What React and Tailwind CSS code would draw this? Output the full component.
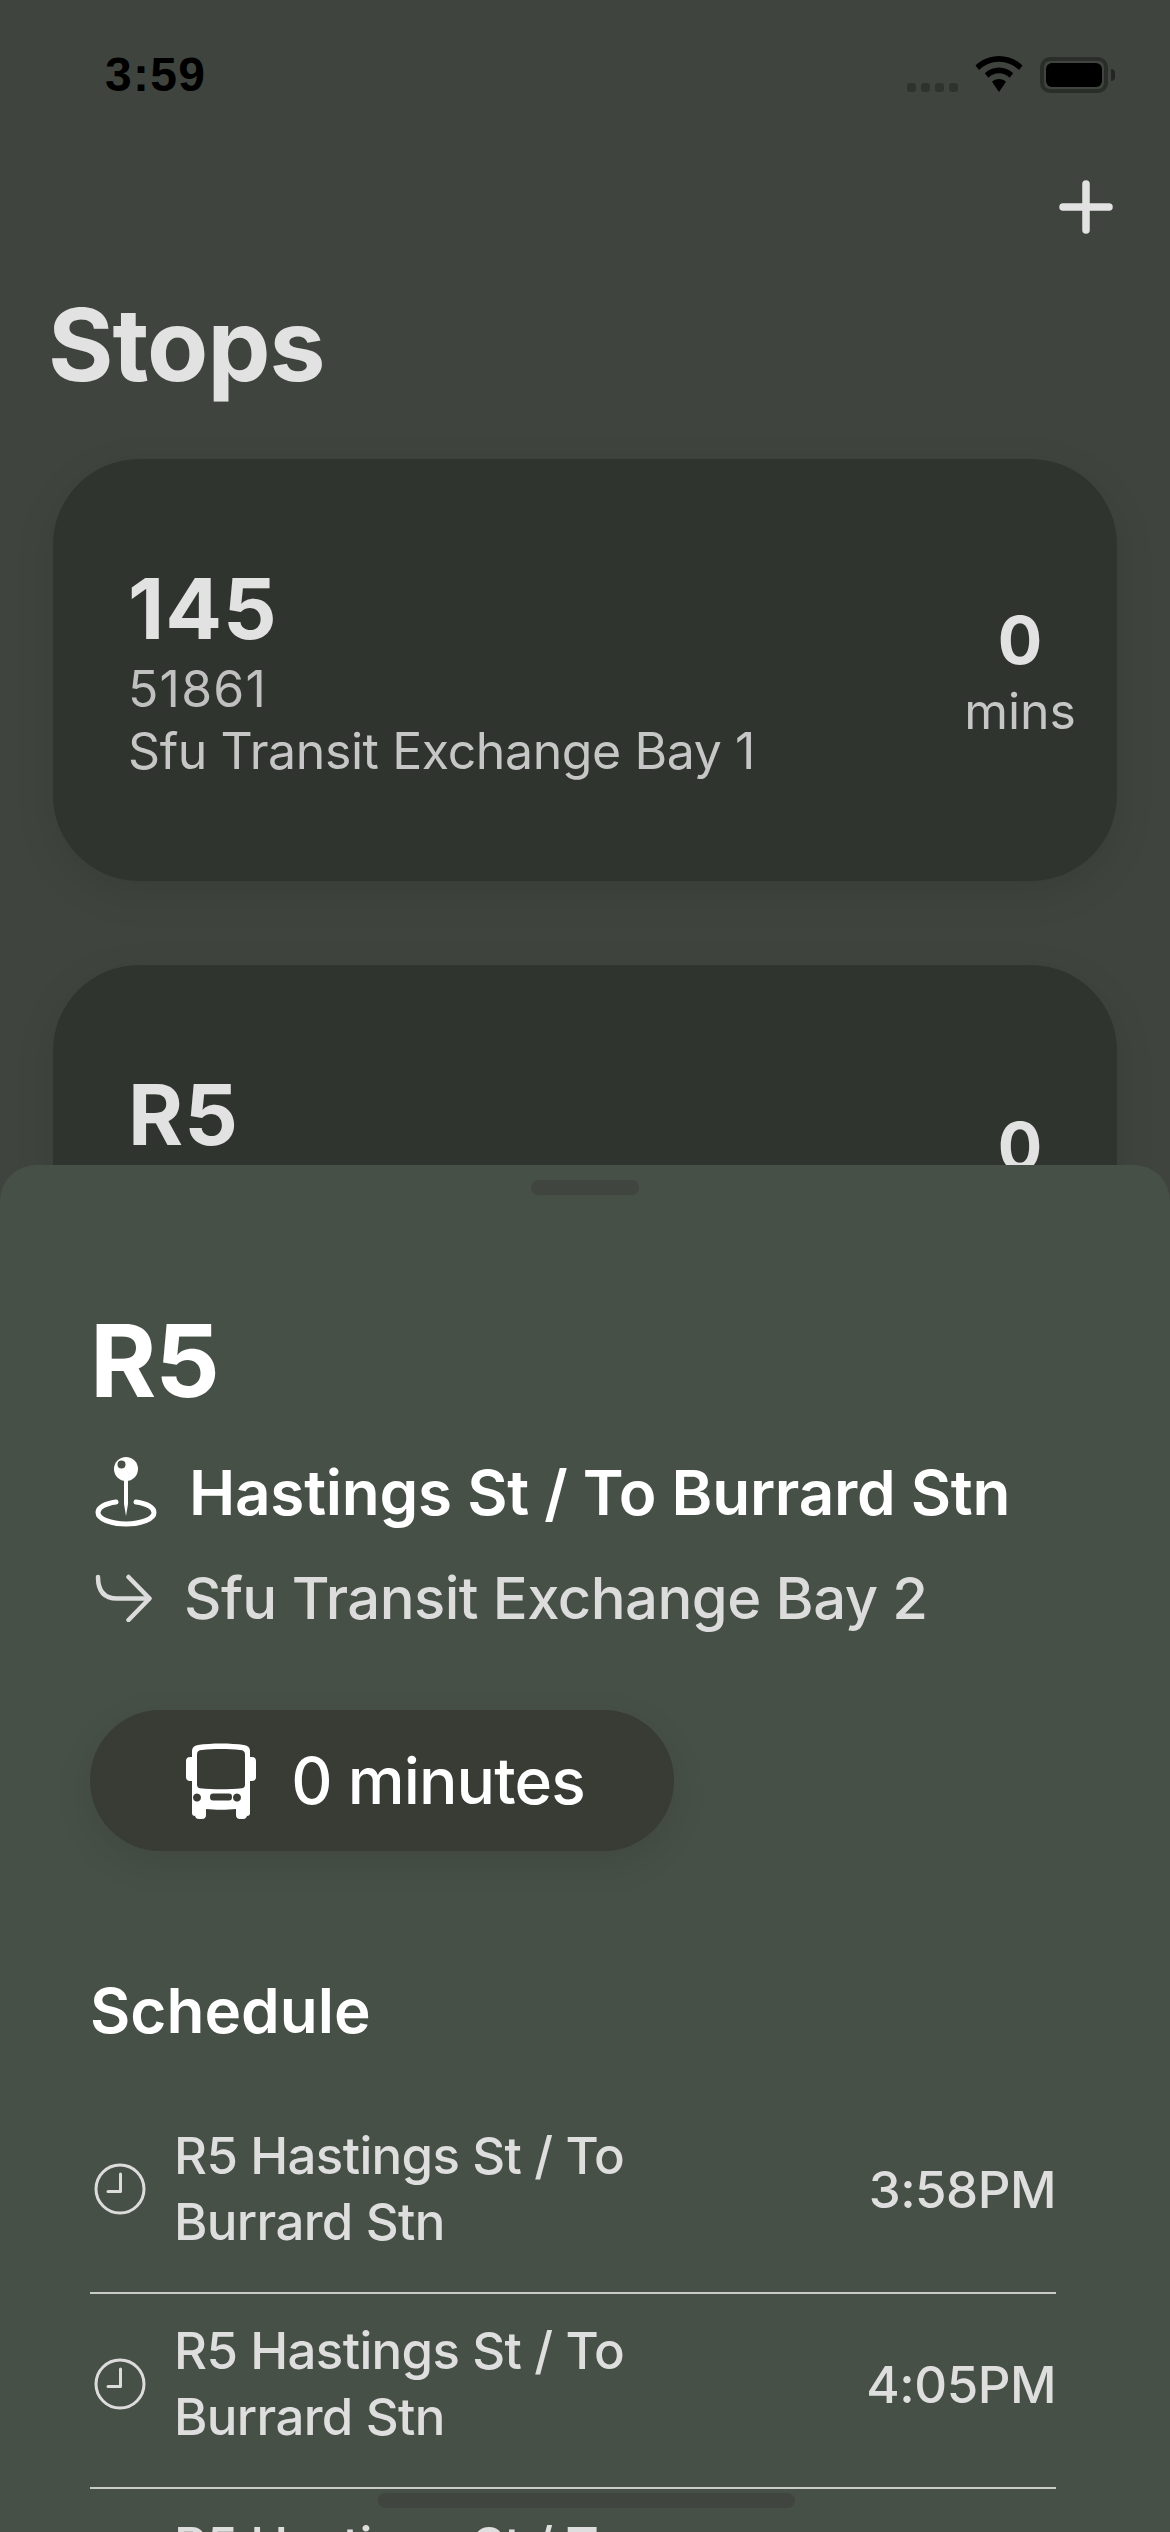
import React from "react";

const font = { fontFamily: "Inter, sans-serif" };

function Wifi() {
  return (
    <svg width="48" height="36" viewBox="0 0 48 36" fill="#000">
      <path d="M24 0C15 0 6.800 3.500 0.500 9.500L4 14C9.300 9 16.300 5.800 24 5.800S38.700 9 44 14L47.500 9.500C41.200 3.500 33 0 24 0Z" />
      <path d="M24 11.500C18.600 11.500 13.600 13.600 9.800 17.200L13.400 21.700C16.200 19 19.900 17.300 24 17.300S31.800 19 34.600 21.700L38.200 17.200C34.400 13.600 29.400 11.500 24 11.500Z" />
      <path d="M24 23C21.300 23 18.900 24 17 25.700L24 36L31 25.700C29.100 24 26.700 23 24 23Z" />
    </svg>
  );
}

function Pin() {
  return (
    <svg width="62" height="72" viewBox="0 0 62 72" fill="none">
      <circle cx="31" cy="13" r="12" fill="#fff" />
      <circle cx="26.500" cy="8.500" r="4" fill="#485046" />
      <path d="M29 24H33V48L31 60L29 48Z" fill="#fff" />
      <path d="M21 46C10 47.500 3 51.500 3 56.500C3 63 15.500 68 31 68S59 63 59 56.500C59 51.500 52 47.500 41 46" stroke="#fff" strokeWidth="5" strokeLinecap="round" />
    </svg>
  );
}

function Turn() {
  return (
    <svg width="58" height="48" viewBox="0 0 58 48" fill="none" stroke="#dcdcdc" strokeWidth="4.500" strokeLinecap="round" strokeLinejoin="round">
      <path d="M3 3C3 17 9 24.500 22 24.500H54" />
      <path d="M33.500 3L54.500 24.500L33.500 46" />
    </svg>
  );
}

function Bus() {
  return (
    <svg width="72" height="76" viewBox="0 0 72 76" fill="#fff">
      <path fillRule="evenodd" d="M13 2C26 0 46 0 59 2C63 2.500 65 4.500 65 8V14H67C69.500 14 71 15.500 71 18V34C71 36.500 69.500 38 67 38H65V70C65 72 64 73 62 73V72C62 74.500 60.500 76 58 76H55C52.500 76 51 74.500 51 72V66C42 67 30 67 21 66V72C21 74.500 19.500 76 17 76H14C11.500 76 10 74.500 10 72V73C8 73 7 72 7 70V38H5C2.500 38 1 36.500 1 34V18C1 15.500 2.500 14 5 14H7V8C7 4.500 9 2.500 13 2ZM17 7C13.500 7 12 8.500 12 11.500V42C12 44 13.500 45 15 45.200C28 46.500 44 46.500 57 45.200C58.500 45 60 44 60 42V11.500C60 8.500 58.500 7 55 7C43 5.800 29 5.800 17 7ZM16 54.500A4 4 0 1 0 16 54.510ZM56 54.500A4 4 0 1 0 56 54.510ZM28 50.500C26 50.500 25 51.500 25 54S26 57.500 28 57.500H44C46 57.500 47 56.500 47 54S46 50.500 44 50.500Z" />
    </svg>
  );
}

function Clock() {
  return (
    <svg width="52" height="52" viewBox="0 0 52 52" fill="none" stroke="#dcdcdc" strokeLinecap="round" strokeLinejoin="round">
      <circle cx="26" cy="26" r="24" strokeWidth="3" />
      <path d="M26.500 11V28.500H14" strokeWidth="3" />
    </svg>
  );
}

function StopCard({ route, id, name, last }) {
  return (
    <div className={`flex items-center justify-between h-[422px] rounded-[86px] bg-[#30342e] pl-[75px] pr-[41px] shadow-[0_12px_40px_rgba(0,0,0,0.1)] ${last ? "" : "mb-[84px]"}`}>
      <div className="flex flex-col pt-[4px]">
        <span className="text-[84px] leading-[92px] font-bold text-[#e2e2e2] tracking-[1px]">{route}</span>
        <span className="text-[50px] leading-[58px] mt-[5px] text-[#c0c0c0] tracking-[1.2px]">{id}</span>
        <span className="text-[50px] leading-[62px] mt-[2px] text-[#c6c6c6] tracking-[-0.4px]">{name}</span>
      </div>
      <div className="flex flex-col items-center mt-[4px]">
        <span className="text-[66px] leading-[72px] font-bold text-[#e2e2e2]">0</span>
        <span className="text-[50px] leading-[60px] mt-[5px] text-[#c6c6c6]">mins</span>
      </div>
    </div>
  );
}

function Row({ time }) {
  return (
    <div className="flex items-center h-[195px] pb-[10px] border-b-2 border-[#c9cbc8]">
      <div className="w-[84px] pl-[4px] mb-[4px] shrink-0 flex"><Clock /></div>
      <div className="flex-1 mb-[3px] text-[51px] leading-[66px] font-medium text-[#dedede] tracking-[-0.65px]">
        R5 Hastings St / To<br />Burrard Stn
      </div>
      <div className="text-[51px] font-medium text-[#dedede] tracking-[-0.5px]">{time}</div>
    </div>
  );
}

export default function App() {
  return (
    <div style={font} className="relative w-[1170px] h-[2532px] overflow-hidden bg-[#3f453e]">
      <div className="flex items-start justify-between h-[150px] pl-[105px] pr-[55px] pt-[51px]">
        <span style={{ fontFamily: "'Liberation Sans', sans-serif" }} className="text-[48px] leading-[48px] font-bold text-black tracking-[1.3px]">3:59</span>
        <div className="flex items-start">
          <div className="flex gap-[5px] mt-[32px] mr-[17px]">
            <span className="w-[9px] h-[9px] rounded-[3px] bg-[#2f332e]" />
            <span className="w-[9px] h-[9px] rounded-[3px] bg-[#2f332e]" />
            <span className="w-[9px] h-[9px] rounded-[3px] bg-[#2f332e]" />
            <span className="w-[9px] h-[9px] rounded-[3px] bg-[#2f332e]" />
          </div>
          <div className="mt-[5px] mr-[17px] flex"><Wifi /></div>
          <div className="flex items-center mt-[6px]">
            <div className="w-[68px] h-[36px] rounded-[10px] border-[4px] border-[#2a2e29] p-[2px]">
              <div className="w-full h-full rounded-[6px] bg-black" />
            </div>
            <span className="w-[4px] h-[12px] ml-[3px] rounded-r-full bg-[#232622]" />
          </div>
        </div>
      </div>
      <div className="flex justify-end pr-[57px] mt-[30px] h-[54px]">
        <svg width="54" height="54" viewBox="0 0 54 54" stroke="#e2e2e2" strokeWidth="7.500" strokeLinecap="round">
          <path d="M27 4V50M4 27H50" />
        </svg>
      </div>
      <h1 className="pl-[48px] mt-[53px] text-[100px] leading-[116px] font-bold text-[#e2e2e2] tracking-[-1px]">Stops</h1>
      <div className="px-[53px] mt-[56px]">
        <StopCard route="145" id="51861" name="Sfu Transit Exchange Bay 1" />
        <StopCard route="R5" id="53096" name="Sfu Transit Exchange Bay 2" last />
      </div>

      <div className="absolute left-0 right-0 top-[1165px] bottom-0 overflow-hidden rounded-t-[36px] bg-[#475046] px-[90px]">
        <div className="mx-auto mt-[15px] w-[108px] h-[15px] rounded-[7px] bg-[#40463f]" />
        <h2 className="mt-[111px] text-[101px] leading-[108px] font-bold text-white tracking-[-1px]">R5</h2>
        <div className="flex items-center mt-[38px] h-[80px]">
          <div className="w-[99px] pl-[5px] shrink-0 flex"><Pin /></div>
          <span className="text-[62px] font-[560] text-white tracking-[-0.25px]">Hastings St / To Burrard Stn</span>
        </div>
        <div className="flex items-center mt-[26px] h-[80px]">
          <div className="w-[94px] shrink-0 flex pl-[5px]"><Turn /></div>
          <span className="text-[58px] font-[520] text-[#dcdcdc] tracking-[-0.55px]">Sfu Transit Exchange Bay 2</span>
        </div>
        <div className="flex items-center justify-center gap-[34px] pl-[6px] w-[584px] h-[141px] mt-[72px] rounded-full bg-[#383c35] shadow-[0_12px_36px_rgba(0,0,0,0.1)]">
          <Bus />
          <span className="text-[64px] font-[540] text-white tracking-[-0.9px]">0 minutes</span>
        </div>
        <h3 className="mt-[122px] text-[62px] leading-[76px] font-[570] text-white">Schedule</h3>
        <div className="mt-[50px] w-[966px]">
          <Row time="3:58PM" />
          <Row time="4:05PM" />
          <Row time="4:12PM" />
        </div>
      </div>
      <div className="absolute left-[378px] top-[2493px] w-[417px] h-[15px] rounded-full bg-[#40463f]" />
    </div>
  );
}
